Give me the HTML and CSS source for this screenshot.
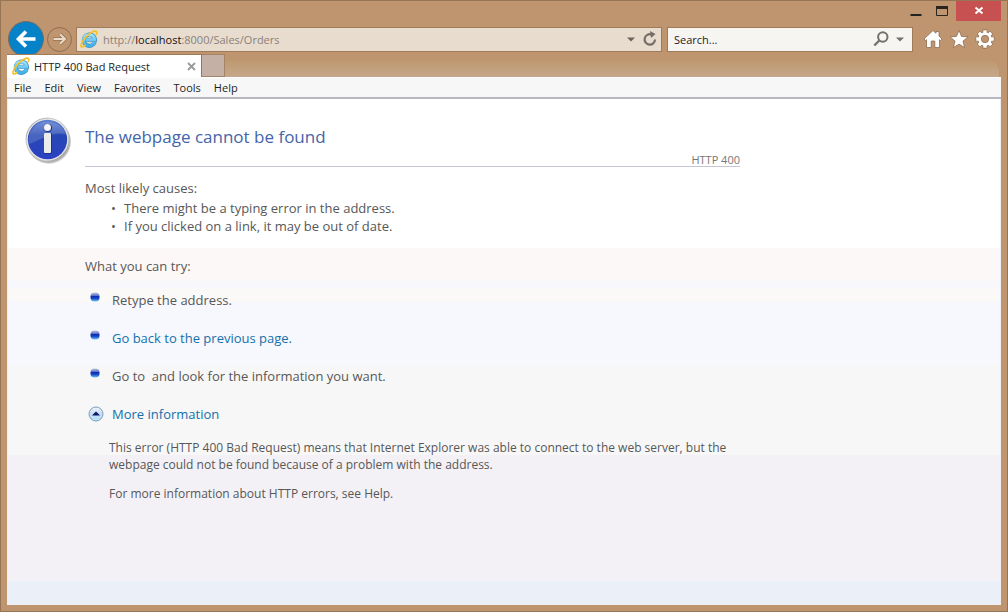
FILE: index.html
```
<!DOCTYPE html>
<html lang="en">
<head>
<meta charset="utf-8">
<title>HTTP 400 Bad Request</title>
<link rel="stylesheet" href="styles.css">
</head>
<body>
<svg class="defs" aria-hidden="true">
  <defs>
    <linearGradient id="eBlue" x1="0" y1="0" x2="0" y2="1">
      <stop offset="0" stop-color="#9be2fa"/><stop offset="1" stop-color="#3fb0e8"/>
    </linearGradient>
    <linearGradient id="orb" x1="0" y1="0" x2="0" y2="1">
      <stop offset="0" stop-color="#5f7fd0"/><stop offset=".4" stop-color="#2747b4"/><stop offset="1" stop-color="#2b41c4"/>
    </linearGradient>
    <linearGradient id="ring" x1="0" y1="0" x2="1" y2="1">
      <stop offset="0" stop-color="#8a8c94"/><stop offset=".3" stop-color="#c8c8c8"/><stop offset=".7" stop-color="#c4c4c4"/><stop offset="1" stop-color="#777a80"/>
    </linearGradient>
    <linearGradient id="dot" x1="0" y1="0" x2="0" y2="1">
      <stop offset="0" stop-color="#c2cbe4"/><stop offset=".35" stop-color="#5a70c4"/><stop offset=".42" stop-color="#0c2cae"/><stop offset=".65" stop-color="#1546c6"/><stop offset="1" stop-color="#6fc3f4"/>
    </linearGradient>
    <linearGradient id="disc" x1="0" y1="0" x2="0" y2="1">
      <stop offset="0" stop-color="#f0f5fb"/><stop offset=".5" stop-color="#c6dcf2"/><stop offset="1" stop-color="#b5e4fb"/>
    </linearGradient>
    <symbol id="ie" viewBox="0 0 18 18">
      <path d="M14.800 11.800A5.600 5.600 0 1 1 15 9.800H5.500" fill="none" stroke="#3a8fc4" stroke-width="4"/>
      <path d="M14.500 11.800A5.600 5.600 0 1 1 14.700 9.800H5.500" fill="none" stroke="url(#eBlue)" stroke-width="2.900"/>
      <path d="M5 15.400C2.500 17.700 .4 17.600 1.100 14.700C2.100 10.500 8 4 12.300 2C15.400 .4 17.700 .9 16.300 4.500" fill="none" stroke="#f7c022" stroke-width="1.700" stroke-linecap="round"/>
    </symbol>
    <symbol id="bullet" viewBox="0 0 10 10">
      <rect x=".5" y=".5" width="9" height="9" rx="4" fill="url(#dot)"/>
    </symbol>
  </defs>
</svg>
<div class="window">
  <header class="titlebar">
    <button class="caption" aria-label="Minimize"><svg width="12" height="20" viewBox="0 0 12 20"><path d="M0.500 13H11.500V15H.5Z" fill="#222"/></svg></button>
    <button class="caption" aria-label="Maximize"><svg width="12" height="20" viewBox="0 0 12 20"><path d="M.5 6V14.500H11.500V6Z" fill="none" stroke="#2b2520"/><path d="M0 5H12V8H0Z" fill="#2b2520"/></svg></button>
    <button class="caption close" aria-label="Close"><svg width="10" height="20" viewBox="0 0 10 20"><path d="M1.500 6.500L8.500 12.500M8.500 6.500L1.500 12.500" stroke="#fff" stroke-width="2"/></svg></button>
  </header>
  <nav class="navrow" aria-label="Browser">
    <button class="back" aria-label="Back"><svg width="22" height="20" viewBox="0 0 22 20"><path d="M20.500 10H4M11 2.500L3.500 10L11 17.500" fill="none" stroke="#fff" stroke-width="3.600"/></svg></button>
    <button class="forward" aria-label="Forward"><svg width="14" height="12" viewBox="0 0 14 12"><path d="M0 6H12M7 1L12 6L7 11" fill="none" stroke="#977353" stroke-width="3.400"/><path d="M.5 6H11.500M7 1.300L12 6L7 10.700" fill="none" stroke="#e9dac9" stroke-width="2"/></svg></button>
    <div class="address">
      <svg class="ie" width="18" height="18"><use href="#ie"/></svg>
      <div class="url" role="textbox" aria-label="Address" tabindex="0">http://<span class="host">localhost</span>:8000/Sales/Orders</div>
      <button class="mini" aria-label="Show address list"><svg width="8" height="5"><path d="M0 .5H8L4 4.500Z" fill="#6b645d"/></svg></button>
      <button class="mini" aria-label="Refresh"><svg width="14" height="16" viewBox="0 0 14 16"><path d="M8.500 3.500A5.200 5.200 0 1 0 12 8.500" fill="none" stroke="#756e67" stroke-width="2.200"/><path d="M7 0L12.500 3L8 7Z" fill="#756e67"/></svg></button>
    </div>
    <div class="search">
      <input type="text" aria-label="Search" placeholder="Search...">
      <button class="mini" aria-label="Search"><svg width="16" height="16" viewBox="0 0 16 16"><circle cx="9.800" cy="6" r="4.700" fill="none" stroke="#74706c" stroke-width="2"/><path d="M6.300 9.500L1.300 14.500" stroke="#74706c" stroke-width="2.400"/></svg></button>
      <button class="mini" aria-label="Search options"><svg width="8" height="5"><path d="M0 .5H8L4 4.500Z" fill="#74706c"/></svg></button>
    </div>
    <div class="tools">
      <button class="mini" aria-label="Home"><svg width="20" height="20" viewBox="0 0 20 20"><path d="M10 1.500L13 4.300V2.500H16V7L19 10L17.500 11.500L16.500 10.700V18.500H11.800V12H8.200V18.500H3.500V10.700L2.500 11.500L1 10Z" fill="#fff" stroke="#8d6f53" stroke-width=".8"/></svg></button>
      <button class="mini" aria-label="Favorites"><svg width="20" height="20" viewBox="0 0 20 20"><path d="M10 1.300L12.500 7.400L19 7.900L14 12.100L15.600 18.600L10 15.100L4.400 18.600L6 12.100L1 7.900L7.500 7.400Z" fill="#fff" stroke="#8d6f53" stroke-width=".8"/></svg></button>
      <button class="mini" aria-label="Tools"><svg width="20" height="20" viewBox="0 0 20 20"><g stroke="#8d6f53" stroke-width="4.600"><path d="M10 .6V19.400M.6 10H19.400M3.400 3.400L16.600 16.600M16.600 3.400L3.400 16.600"/></g><circle cx="10" cy="10" r="7.300" fill="#8d6f53"/><path d="M10 1.200V18.800M1.200 10H18.800M3.800 3.800L16.200 16.200M16.200 3.800L3.800 16.200" stroke="#fff" stroke-width="3.400"/><circle cx="10" cy="10" r="6.700" fill="#fff"/><circle cx="10" cy="10" r="3.700" fill="#bf956f" stroke="#8d6f53" stroke-width=".8"/></svg></button>
    </div>
  </nav>
  <div class="tabs">
    <div class="tab">
      <svg class="ie" width="18" height="18"><use href="#ie"/></svg>
      <span class="tabname">HTTP 400 Bad Request</span>
      <button class="mini" aria-label="Close tab"><svg width="9" height="9" viewBox="0 0 9 9"><path d="M1 1L8 8M8 1L1 8" stroke="#999" stroke-width="1.800"/></svg></button>
    </div>
    <button class="newtab" aria-label="New tab"></button>
  </div>
  <div class="menubar">
    <button>File</button><button>Edit</button><button>View</button><button>Favorites</button><button>Tools</button><button>Help</button>
  </div>
  <main class="page">
    <svg class="info" width="48" height="50" viewBox="0 0 48 50" aria-hidden="true">
      <ellipse cx="25" cy="26" rx="22" ry="22" fill="#000" opacity=".12"/>
      <ellipse cx="24.500" cy="25" rx="22" ry="22" fill="#000" opacity=".2"/>
      <circle cx="23.500" cy="23.500" r="22" fill="url(#ring)"/>
      <circle cx="23.500" cy="23.500" r="21" fill="#e6e6e6"/>
      <circle cx="23.500" cy="23.500" r="19.700" fill="url(#orb)"/>
      <path d="M4.500 22A19.500 19.500 0 0 1 42 18C28 15 17 24 4.500 28Z" fill="#fff" opacity=".16"/>
      <circle cx="24" cy="12" r="4" fill="#1c3288"/><circle cx="23.500" cy="11.500" r="3.500" fill="#f5f5f5"/>
      <rect x="20" y="17" width="8" height="21" rx="1" fill="#1c3288"/><rect x="20" y="17" width="7" height="20" rx="1" fill="#ececec"/>
    </svg>
    <div class="content">
      <div class="heading"><h1>The webpage cannot be found</h1><span class="code">HTTP 400</span></div>
      <h2>Most likely causes:</h2>
      <ul class="causes"><li>There might be a typing error in the address.</li><li>If you clicked on a link, it may be out of date.</li></ul>
      <h2>What you can try:</h2>
      <ul class="tries">
        <li><svg width="10" height="10"><use href="#bullet"/></svg><span>Retype the address.</span></li>
        <li><svg width="10" height="10"><use href="#bullet"/></svg><a href="#">Go back to the previous page.</a></li>
        <li><svg width="10" height="10"><use href="#bullet"/></svg><span>Go to &nbsp;and look for the information you want.</span></li>
      </ul>
      <button class="more"><svg width="16" height="16" viewBox="0 0 16 16"><circle cx="8" cy="8" r="7" fill="url(#disc)" stroke="#7f9dbb"/><path d="M4 9.500L8 5.500L12 9.500Z" fill="#07146a"/></svg>More information</button>
      <div class="details">
        <p>This error (HTTP 400 Bad Request) means that Internet Explorer was able to connect to the web server, but the webpage could not be found because of a problem with the address.</p>
        <p>For more information about HTTP errors, see Help.</p>
      </div>
    </div>
  </main>
</div>
</body>
</html>
```
FILE: styles.css
```
* { box-sizing: border-box; }
body { margin: 0; font-family: "Open Sans", "Noto Sans", sans-serif; font-size: 11px; color: #1e1e1e; }
button { border: 0; padding: 0; background: none; font: inherit; color: inherit; }
svg { display: block; flex: none; }
.defs { position: absolute; width: 0; height: 0; }
.window { min-height: 100vh; display: flex; flex-direction: column; padding: 0 6px 6px; background: #bf956f; border: 1px solid #967454; }
.titlebar { display: flex; justify-content: flex-end; height: 20px; gap: 14px; }
.caption { display: flex; align-items: center; justify-content: center; }
.close { width: 45px; background: #c75050; margin-left: -6px; }
.navrow { display: flex; align-items: center; height: 33px; padding: 3px 6px 0 1px; }
.back { width: 36px; height: 36px; border-radius: 50%; background: #0682c8; border: 1px solid #7b6a5c; display: flex; align-items: center; justify-content: center; flex: none; }
.forward { width: 25px; height: 25px; margin: 0 4px 0 3px; border-radius: 50%; border: 1px solid #8f6e51; display: flex; align-items: center; justify-content: center; flex: none; }
.address, .search { display: flex; align-items: center; height: 25px; border: 1px solid #a07b5a; background: #e8dccf; }
.address { flex: 1; padding: 0 4px 0 3px; gap: 8px; }
.url { flex: 1; margin-left: -3px; color: #8a8178; white-space: nowrap; }
.host { color: #111; }
.search { width: 246px; margin-left: 5px; padding: 0 8px 0 6px; gap: 7px; background: #f7f5f1; }
.search input { flex: 1; min-width: 0; border: 0; padding: 0; background: none; font: inherit; }
.search input::placeholder { color: #222; opacity: 1; }
.tools { display: flex; gap: 6px; margin-left: 10px; }
.tabs { position: relative; z-index: 1; display: flex; height: 23px; }
.tabs::before { content: ""; position: absolute; z-index: -1; inset: 6px 2px 0 180px; border-radius: 0 12px 0 0; background: linear-gradient(#be996f, #c5a78b); }
.tab { width: 195px; display: flex; align-items: center; gap: 4px; padding: 0 5px; background: #fff; border-top: 1px solid #a07b5a; border-right: 1px solid #94765a; }
.tabname { flex: 1; white-space: nowrap; }
.newtab { width: 23px; background: #c4b0a4; border: 1px solid #a48368; border-left: 0; }
.menubar { display: flex; gap: 13px; height: 22px; padding: 0 7px; background: #f7f7f7; border-top: 1px solid #fff; border-bottom: 2px solid #b7b7c2; }
.page { flex: 1; display: flex; gap: 13px; padding: 17px 12px 0 16px; border: 1px solid #eceef2; border-top: 0; color: #575757;
  background: linear-gradient(#fff 149px, #fcf8f7 149px 182px, #f8f8fc 182px 189px, #fbf9f8 189px 203px, #f7f8fe 203px 266px, #f7f7f7 266px 356px, #f3f1f6 356px 482px, #ebeff8 482px); }
.content { flex: 1; max-width: 655px; font-size: 13px; line-height: 18px; }
.heading { display: flex; flex-direction: column; border-bottom: 1px solid #c6c6d8; }
h1 { margin: 9px 0 5px; font-size: 17px; line-height: 24px; font-weight: 400; color: #4465a9; }
.code { align-self: flex-end; font-size: 11px; line-height: 12px; color: #777; }
h2 { margin: 12px 0 2px; font: inherit; }
ul { list-style: none; margin: 0; padding: 0; }
.causes { margin-bottom: 22px; }
.causes li { display: flex; padding-left: 26px; }
.causes li::before { content: "•"; width: 13px; }
.tries { display: grid; gap: 20px; margin-top: 16px; }
.tries li { display: flex; gap: 12px; padding-left: 5px; }
.tries svg { margin-top: 1px; }
a, .more { color: #1370ab; text-decoration: none; }
.more { display: flex; align-items: center; gap: 8px; margin: 20px 0 0 3px; line-height: 18px; }
.details { margin: 16px 0 0 24px; font-size: 12px; line-height: 17px; }
.details p { margin: 0 0 12px; }
```
